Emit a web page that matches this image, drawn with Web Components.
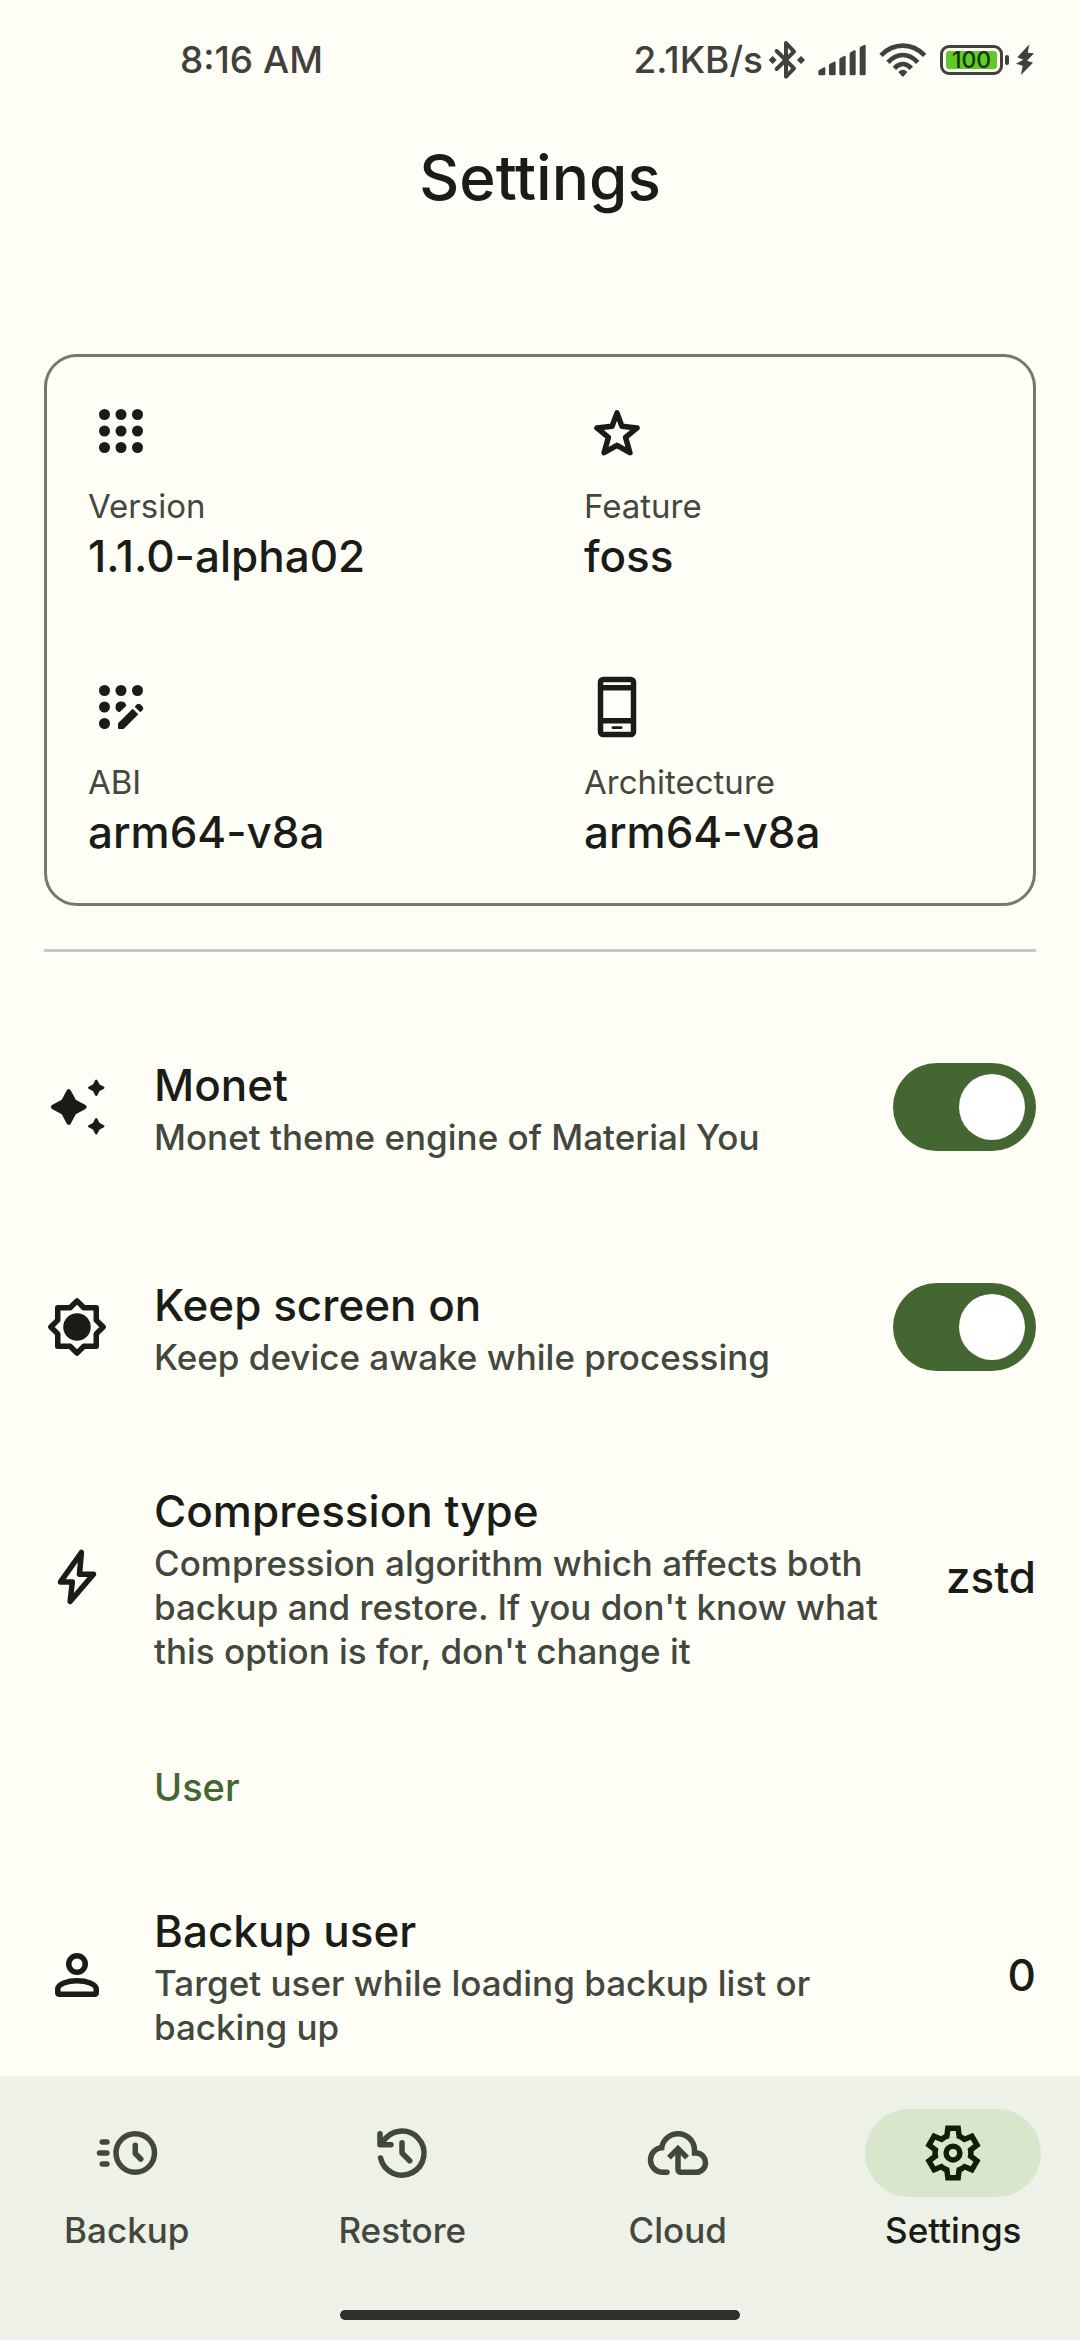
<!DOCTYPE html>
<html lang="en">
<head>
<meta charset="utf-8">
<meta name="viewport" content="width=device-width, initial-scale=1">
<title>Settings</title>
<style>
  :root {
    --surface: #fefef6;
    --nav: #eef1e7;
    --ink: #1a1c17;
    --muted: #43483e;
    --status: #40403c;
    --outline: #74796d;
    --divider: #c7c6ce;
    --primary: #446732;
    --pill: #d8e7cb;
  }
  html, body { height: 100%; margin: 0; }
  body { background: var(--surface); color: var(--ink); font-family: Inter, Roboto, sans-serif; font-weight: 500; }
</style>
</head>
<body>
<settings-app></settings-app>

<script>
const ICONS = {
  apps: `<svg viewBox="0 0 24 24"><g fill="currentColor"><circle cx="6" cy="6" r="2"/><circle cx="12" cy="6" r="2"/><circle cx="18" cy="6" r="2"/><circle cx="6" cy="12" r="2"/><circle cx="12" cy="12" r="2"/><circle cx="18" cy="12" r="2"/><circle cx="6" cy="18" r="2"/><circle cx="12" cy="18" r="2"/><circle cx="18" cy="18" r="2"/></g></svg>`,
  star: `<svg viewBox="0 0 24 24"><path d="M12 5.4 13.8 10.3 19.3 10.9 15.1 14.3 16.7 19.9 12 17.2 7.3 19.9 8.9 14.3 4.7 10.9 10.2 10.3Z" fill="none" stroke="currentColor" stroke-width="2" stroke-linejoin="round"/></svg>`,
  appsEdit: `<svg viewBox="24 42 198 198"><g fill="currentColor"><circle cx="73.500" cy="91.500" r="16.500"/><circle cx="123" cy="91.500" r="16.500"/><circle cx="172.500" cy="91.500" r="16.500"/><circle cx="73.500" cy="141" r="16.500"/><path d="M139 137A16.500 16.500 0 1 0 119 157Z"/><circle cx="73.500" cy="190.500" r="16.500"/><path d="M114 190 158 146 175 163 131 207H117Q114 207 114 204Z"/><path d="M164 140 171 133Q176 129 181 133L188 140Q192 145 188 150L181 157Z"/></g></svg>`,
  phone: `<svg viewBox="0 -960 960 960"><path fill="currentColor" d="M280-40q-33 0-56.500-23.500T200-120v-720q0-33 23.500-56.500T280-920h400q33 0 56.500 23.500T760-840v720q0 33-23.500 56.500T680-40H280Zm0-200v120h400v-120H280Zm0-80h400v-400H280v400Zm0-480h400v-40H280v40Z"/><path d="M420-180H540" stroke="currentColor" stroke-width="40" stroke-linecap="round"/></svg>`,
  sparkles: `<svg viewBox="0 0 24 24"><g fill="currentColor" stroke="currentColor" stroke-linejoin="round"><path stroke-width="1.600" d="M9 6.300 11 10 14.700 12 11 14 9 17.700 7 14 3.300 12 7 10Z"/><path stroke-width="0.800" d="M19 2.400 19.900 4.100 21.600 5 19.900 5.900 19 7.600 18.100 5.900 16.400 5 18.100 4.100Z"/><path stroke-width="0.800" d="M19 16.400 19.900 18.100 21.600 19 19.900 19.900 19 21.600 18.100 19.900 16.400 19 18.100 18.100Z"/></g></svg>`,
  sun: `<svg viewBox="-12 -12 24 24"><path d="M0-9.500 2.500-7H7V-2.500L9.500 0 7 2.500V7H2.500L0 9.500-2.500 7H-7V2.500L-9.500 0-7-2.500V-7H-2.500Z" fill="none" stroke="currentColor" stroke-width="2" stroke-linejoin="round"/><circle r="5" fill="currentColor"/></svg>`,
  bolt: `<svg viewBox="0 0 24 24"><path d="M13.600 3.100 12.900 11H18L9.500 20.900 10.300 13.800H6Z" fill="none" stroke="currentColor" stroke-width="2" stroke-linejoin="round"/></svg>`,
  person: `<svg viewBox="0 0 24 24"><g fill="none" stroke="currentColor" stroke-width="2" stroke-linejoin="round"><circle cx="12" cy="8" r="3"/><path d="M5 18.400V17.200C5 15.200 8.600 14.100 12 14.100S19 15.200 19 17.200V18.400Q19 19 18.400 19H5.600Q5 19 5 18.400Z"/></g></svg>`,
  backup: `<svg viewBox="0 0 24 24"><g fill="none" stroke="currentColor" stroke-width="2" stroke-linecap="round" stroke-linejoin="round"><circle cx="15" cy="12" r="7"/><path d="M15 9.200V12.200L17 14.200M3 8H4.700M2 12H4.700M3 16H4.700"/></g></svg>`,
  restore: `<svg viewBox="0 0 24 24"><g fill="none" stroke="currentColor" stroke-width="2" stroke-linecap="round" stroke-linejoin="round"><path d="M4.200 13.800A8 8 0 1 0 5.100 8M4 5V9H8M12 8.300V12L14.800 14.800"/></g></svg>`,
  cloud: `<svg viewBox="0 -960 960 960"><path fill="currentColor" d="M260-160q-91 0-155.500-63T40-377q0-78 47-139t123-78q25-92 100-149t170-57q117 0 198.500 81.500T760-520q69 8 114.500 59.500T920-340q0 75-52.500 127.500T740-160H520q-33 0-56.500-23.500T440-240v-206l-64 62-56-56 160-160 160 160-56 56-64-62v206h220q42 0 71-29t29-71q0-42-29-71t-71-29h-60v-80q0-83-58.500-141.500T480-720q-83 0-141.500 58.500T280-520h-20q-58 0-99 41t-41 99q0 58 41 99t99 41h60q40 0 40 40t-40 40H260Z"/></svg>`,
  gear: `<svg viewBox="0 -960 960 960"><path fill="currentColor" d="m370-80-16-128q-13-5-24.500-12T307-235l-119 50L78-375l103-78q-1-7-1-13.500v-27q0-6.500 1-13.500L78-585l110-190 119 50q11-8 23-15t24-12l16-128h220l16 128q13 5 24.500 12t22.500 15l119-50 110 190-103 78q1 7 1 13.500v27q0 6.500-2 13.500l103 78-110 190-118-50q-11 8-23 15t-24 12L590-80H370Zm70-80h79l14-106q31-8 57.500-23.500T639-327l99 41 39-68-86-65q5-14 7-29.500t2-31.500q0-16-2-31.500t-7-29.500l86-65-39-68-99 42q-22-23-48.500-38.500T533-694l-13-106h-79l-14 106q-31 8-57.500 23.500T321-633l-99-41-39 68 86 64q-5 15-7 30t-2 32q0 16 2 31t7 30l-86 65 39 68 99-42q22 23 48.500 38.500T427-266l13 106Z"/><circle cx="480" cy="-480" r="100" fill="none" stroke="currentColor" stroke-width="80"/></svg>`
};

const define = (name, html) => {
  const template = document.createElement('template');
  template.innerHTML = html;
  customElements.define(name, class extends HTMLElement {
    constructor() {
      super();
      this.attachShadow({ mode: 'open' }).append(template.content.cloneNode(true));
    }
  });
};

customElements.define('ui-icon', class extends HTMLElement {
  connectedCallback() {
    if (this.shadowRoot) return;
    this.attachShadow({ mode: 'open' }).innerHTML = `
      <style>:host{display:block;flex:none;width:66px;height:66px} svg{display:block;width:100%;height:100%}</style>
      ${ICONS[this.getAttribute('name')]}`;
    this.setAttribute('aria-hidden', 'true');
  }
});

define('status-bar', `
  <style>
    :host { display: flex; justify-content: space-between; align-items: center; height: 60px; padding: 30px 46px 0 180px; color: var(--status); font-size: 37px; line-height: 60px; }
    div { display: flex; align-items: center; }
    .icons { gap: 13px; }
    .net { gap: 6px; }
    .power { gap: 7px; }
    svg { display: block; flex: none; }
    .battery { gap: 2px; }
    .shell { box-sizing: border-box; width: 63px; height: 30px; padding: 3px; border: 3px solid var(--status); border-radius: 9px; }
    .fill { flex: 1; height: 18px; justify-content: center; border-radius: 3px; background: #62c92d; color: #173508; font-size: 23px; line-height: 18px; }
    .cap { width: 4px; height: 10px; border-radius: 2px; background: var(--status); }
  </style>
  <time>8:16 AM</time>
  <div class="icons">
    <div class="net"><span>2.1KB/s</span>
      <svg width="36" height="40" viewBox="507 57 108 120"><path d="M530 90 582 142 558 167V66L582 92 530 144" fill="none" stroke="currentColor" stroke-width="12" stroke-linejoin="round" stroke-linecap="round"/><path d="M518 106 529 117 518 128 507 117ZM603 106 614 117 603 128 592 117Z" fill="currentColor" stroke="currentColor" stroke-width="2" stroke-linejoin="round"/></svg>
    </div>
    <svg width="48" height="32" viewBox="654 71 144 96"><g fill="currentColor"><path d="M655 153Q655 150 659 148L672 141Q676 140 676 144V161Q676 165 672 165H659Q655 165 655 161Z"/><path d="M687 135Q687 132 690 130L702 124Q707 122 707 127V161Q707 165 703 165H691Q687 165 687 161Z"/><path d="M718 118Q718 115 721 113L732 107Q737 105 737 110V161Q737 165 733 165H722Q718 165 718 161Z"/><path d="M749 101Q749 98 752 96L762 90Q767 88 767 93V161Q767 165 763 165H753Q749 165 749 161Z"/><path d="M779 84Q779 81 782 79L792 74Q797 72 797 77V161Q797 165 793 165H783Q779 165 779 161Z"/></g></svg>
    <svg width="48" height="36" viewBox="834 64 144 108"><g fill="none" stroke="currentColor" stroke-width="14"><path d="M840 104Q869 75 905.500 75T971 104"/><path d="M861 125Q881 103 905.500 103T950 125"/><path d="M880 143Q892 130 905.500 130T931 143"/></g><path d="M892 154Q905.500 141 919 154L909 166Q905.500 169 902 166Z" fill="currentColor"/></svg>
    <div class="power">
      <div class="battery"><div class="shell"><div class="fill">100</div></div><div class="cap"></div></div>
      <svg width="18" height="32" viewBox="1248 70 54 96"><path d="M1288 71 1252 110 1270 117 1248 129 1268 135 1263 163 1299 126 1281 120 1302 98 1283 96Z" fill="currentColor"/></svg>
    </div>
  </div>`);

define('app-header', `
  <style>
    :host { display: flex; justify-content: center; align-items: center; height: 176px; }
    h1 { margin: 0; font-size: 62px; line-height: 80px; font-weight: 500; }
  </style>
  <h1><slot></slot></h1>`);

define('info-card', `
  <style>
    :host { display: grid; grid-template-columns: 1fr 1fr; gap: 88px; padding: 41px; border: 3px solid var(--outline); border-radius: 33px; }
  </style>
  <slot></slot>`);

define('info-cell', `
  <style>
    :host { display: flex; flex-direction: column; }
    .label { margin-top: 22px; color: var(--muted); font-size: 33px; line-height: 40px; font-weight: 400; }
    .value { font-size: 44px; line-height: 60px; }
  </style>
  <slot name="icon"></slot>
  <span class="label"><slot name="label"></slot></span>
  <span class="value"><slot></slot></span>`);

const rowStyle = `
    :host { display: flex; align-items: center; gap: 44px; padding: 44px; }
    .text { flex: 1; min-width: 0; display: flex; flex-direction: column; justify-content: center; min-height: 132px; }
    .title { font-size: 44px; line-height: 60px; }
    .desc { color: var(--muted); font-size: 35px; line-height: 44px; }`;

define('switch-row', `
  <style>${rowStyle}
    input { appearance: none; flex: none; display: flex; align-items: center; box-sizing: border-box; width: 143px; height: 88px; margin: 0; padding: 11px; border-radius: 44px; background: var(--outline); }
    input::before { content: ""; width: 66px; height: 66px; border-radius: 50%; background: #fff; }
    input:checked { justify-content: flex-end; background: var(--primary); }
  </style>
  <slot name="icon"></slot>
  <label class="text" for="toggle"><span class="title"><slot name="title"></slot></span><span class="desc"><slot></slot></span></label>
  <input id="toggle" type="checkbox" role="switch" checked>`);

define('value-row', `
  <style>${rowStyle}
    button { flex: none; min-width: 92px; padding: 0; border: 0; background: none; color: inherit; font: inherit; font-size: 44px; line-height: 60px; text-align: right; }
  </style>
  <slot name="icon"></slot>
  <div class="text"><span class="title" id="t"><slot name="title"></slot></span><span class="desc"><slot></slot></span></div>
  <button type="button" aria-describedby="t"><slot name="value"></slot></button>`);

define('section-title', `
  <style>
    :host { display: block; padding: 48px 44px 48px 154px; color: var(--primary); }
    h2 { margin: 0; font-size: 38px; line-height: 44px; font-weight: 500; }
  </style>
  <h2><slot></slot></h2>`);

define('nav-item', `
  <style>
    :host { flex: 1; display: block; color: var(--muted); }
    :host([active]) { color: var(--ink); }
    a { display: flex; flex-direction: column; align-items: center; gap: 11px; color: inherit; text-decoration: none; }
    .pill { display: flex; justify-content: center; align-items: center; width: 176px; height: 88px; border-radius: 44px; }
    :host([active]) .pill { background: var(--pill); color: #111f0a; }
    .label { font-size: 35px; line-height: 44px; }
  </style>
  <a href="#"><span class="pill"><slot name="icon"></slot></span><span class="label"><slot></slot></span></a>`);

define('nav-bar', `
  <style>
    :host { display: flex; flex-direction: column; flex: none; background: var(--nav); }
    nav { display: flex; gap: 22px; padding: 33px 0 58px; }
    .handle { align-self: center; width: 37%; height: 10px; margin-bottom: 20px; border-radius: 5px; background: #2f302c; }
  </style>
  <nav aria-label="Main"><slot></slot></nav>
  <div class="handle"></div>`);

define('settings-app', `
  <style>
    :host { display: flex; flex-direction: column; height: 100vh; }
    main { flex: 1; min-height: 0; overflow-y: auto; scrollbar-width: none; padding-top: 88px; }
    info-card { margin: 0 44px; }
    hr { height: 3px; margin: 43px 44px 45px; border: 0; background: var(--divider); }
  </style>
  <status-bar></status-bar>
  <app-header>Settings</app-header>
  <main>
    <info-card>
      <info-cell><ui-icon slot="icon" name="apps"></ui-icon><span slot="label">Version</span>1.1.0-alpha02</info-cell>
      <info-cell><ui-icon slot="icon" name="star"></ui-icon><span slot="label">Feature</span>foss</info-cell>
      <info-cell><ui-icon slot="icon" name="appsEdit"></ui-icon><span slot="label">ABI</span>arm64-v8a</info-cell>
      <info-cell><ui-icon slot="icon" name="phone"></ui-icon><span slot="label">Architecture</span>arm64-v8a</info-cell>
    </info-card>
    <hr>
    <switch-row><ui-icon slot="icon" name="sparkles"></ui-icon><span slot="title">Monet</span>Monet theme engine of Material You</switch-row>
    <switch-row><ui-icon slot="icon" name="sun"></ui-icon><span slot="title">Keep screen on</span>Keep device awake while processing</switch-row>
    <value-row><ui-icon slot="icon" name="bolt"></ui-icon><span slot="title">Compression type</span>Compression algorithm which affects both backup and restore. If you don't know what this option is for, don't change it<span slot="value">zstd</span></value-row>
    <section-title>User</section-title>
    <value-row><ui-icon slot="icon" name="person"></ui-icon><span slot="title">Backup user</span>Target user while loading backup list or backing up<span slot="value">0</span></value-row>
  </main>
  <nav-bar>
    <nav-item><ui-icon slot="icon" name="backup"></ui-icon>Backup</nav-item>
    <nav-item><ui-icon slot="icon" name="restore"></ui-icon>Restore</nav-item>
    <nav-item><ui-icon slot="icon" name="cloud"></ui-icon>Cloud</nav-item>
    <nav-item active><ui-icon slot="icon" name="gear"></ui-icon>Settings</nav-item>
  </nav-bar>`);
</script>
</body>
</html>
